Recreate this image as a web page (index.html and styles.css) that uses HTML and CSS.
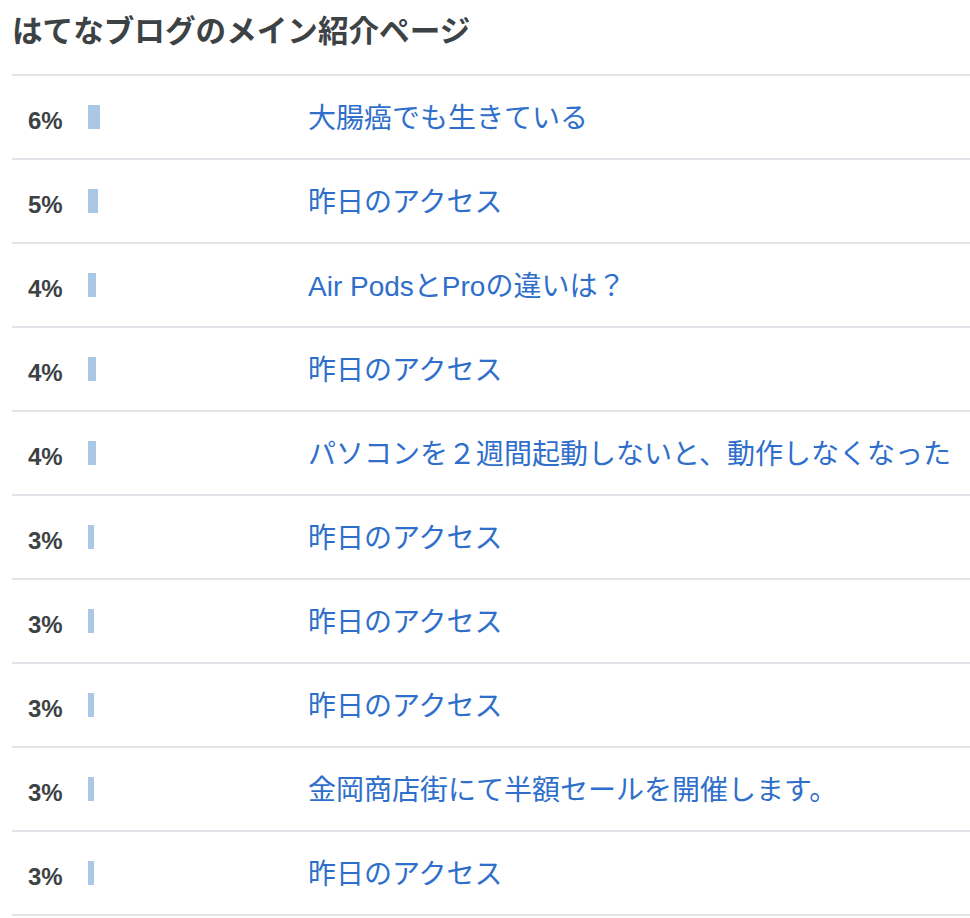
FILE: index.html
```html
<!DOCTYPE html>
<html lang="ja">
<head>
<meta charset="utf-8">
<link rel="stylesheet" href="styles.css">
</head>
<body>
<div class="panel">
  <h2 class="title">はてなブログのメイン紹介ページ</h2>
  <ul class="list">
    <li class="row"><span class="pct">6%</span><span class="barcell"><span class="bar" style="width:12px"></span></span><a class="link" href="#">大腸癌でも生きている</a></li>
    <li class="row"><span class="pct">5%</span><span class="barcell"><span class="bar" style="width:10px"></span></span><a class="link" href="#">昨日のアクセス</a></li>
    <li class="row"><span class="pct">4%</span><span class="barcell"><span class="bar" style="width:8px"></span></span><a class="link" href="#">Air PodsとProの違いは？</a></li>
    <li class="row"><span class="pct">4%</span><span class="barcell"><span class="bar" style="width:8px"></span></span><a class="link" href="#">昨日のアクセス</a></li>
    <li class="row"><span class="pct">4%</span><span class="barcell"><span class="bar" style="width:8px"></span></span><a class="link" href="#">パソコンを２週間起動しないと、動作しなくなった</a></li>
    <li class="row"><span class="pct">3%</span><span class="barcell"><span class="bar" style="width:6px"></span></span><a class="link" href="#">昨日のアクセス</a></li>
    <li class="row"><span class="pct">3%</span><span class="barcell"><span class="bar" style="width:6px"></span></span><a class="link" href="#">昨日のアクセス</a></li>
    <li class="row"><span class="pct">3%</span><span class="barcell"><span class="bar" style="width:6px"></span></span><a class="link" href="#">昨日のアクセス</a></li>
    <li class="row"><span class="pct">3%</span><span class="barcell"><span class="bar" style="width:6px"></span></span><a class="link" href="#">金岡商店街にて半額セールを開催します。</a></li>
    <li class="row"><span class="pct">3%</span><span class="barcell"><span class="bar" style="width:6px"></span></span><a class="link" href="#">昨日のアクセス</a></li>
  </ul>
</div>
</body>
</html>
```

FILE: styles.css
```css
html, body {
  margin: 0;
  padding: 0;
  background: #ffffff;
}
body {
  font-family: "Liberation Sans", "Noto Sans CJK JP", sans-serif;
  color: #3d4245;
  overflow: hidden;
}
.panel {
  padding-left: 12px;
}
.title {
  margin: 0;
  height: 74px;
  line-height: 63px;
  font-size: 30.6px;
  font-weight: bold;
  color: #3d4245;
  white-space: nowrap;
}
.list {
  list-style: none;
  margin: 0;
  padding: 0;
  border-top: 2px solid #e1e5e9;
}
.row {
  display: flex;
  align-items: center;
  height: 82px;
  border-bottom: 2px solid #e1e5e9;
  white-space: nowrap;
}
.pct {
  box-sizing: border-box;
  width: 76px;
  padding-left: 16px;
  margin-top: 7px;
  font-size: 24px;
  font-weight: bold;
  color: #3d4245;
  line-height: 24px;
}
.barcell {
  width: 220px;
  display: flex;
  align-items: flex-end;
  height: 24px;
  margin-top: 0;
}
.bar {
  display: block;
  height: 24px;
  background: #abc7e6;
}
.link {
  font-size: 28px;
  color: #2f6fcb;
  text-decoration: none;
  line-height: 40px;
  margin-top: 4px;
}
```
